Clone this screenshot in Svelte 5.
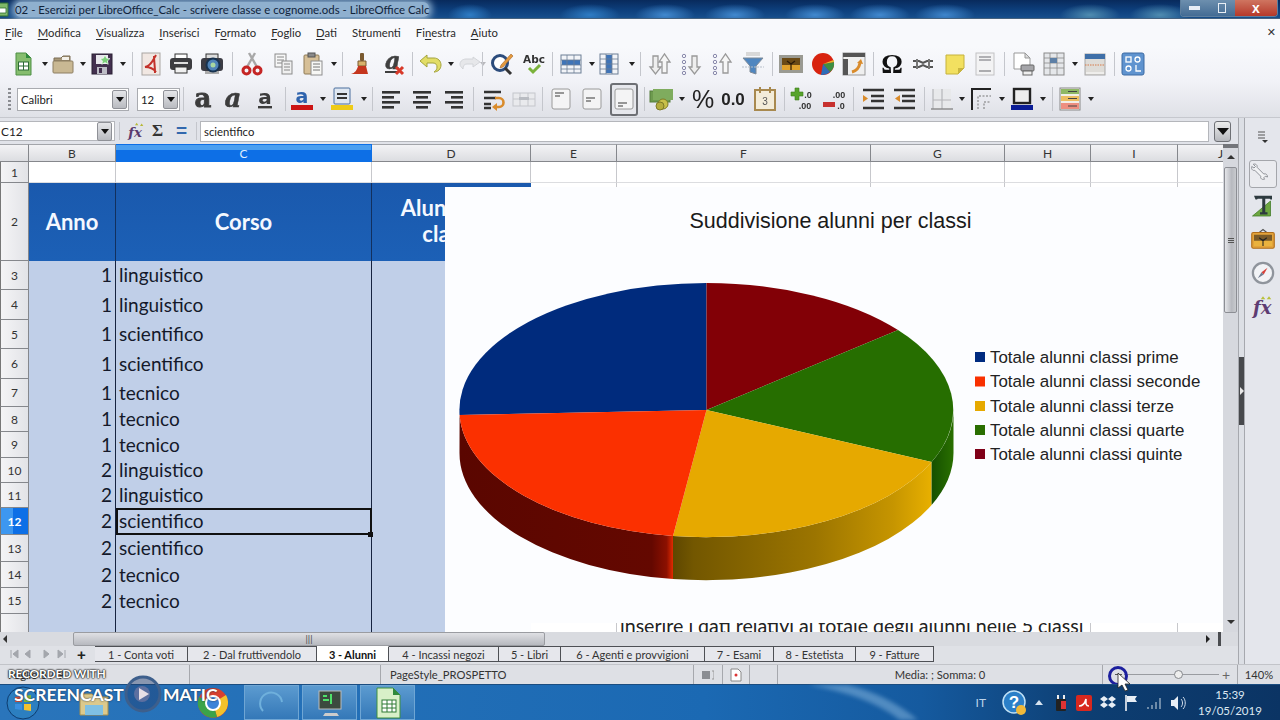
<script>
  const menu = [
    ['', 'F', 'ile'], ['', 'M', 'odifica'], ['', 'V', 'isualizza'], ['', 'I', 'nserisci'], ['F', 'o', 'rmato'],
    ['', 'F', 'oglio'], ['', 'D', 'ati'], ['St', 'r', 'umenti'], ['Fi', 'n', 'estra'], ['', 'A', 'iuto']
  ];

  // c = centre x of each toolbar item on the window
  function place(items) {
    let end = 0;
    return items.map(([k, c, w, label]) => {
      const width = w ?? (k === 'dd' ? 7 : k === 'sep' ? 1 : 24);
      const ml = c - width / 2 - end;
      end = c + width / 2;
      return { k, width, ml, label };
    });
  }

  const tb1 = place([
    ['new', 23], ['dd', 45], ['open', 64], ['dd', 84], ['save', 104], ['dd', 125], ['sep', 135], ['pdf', 154], ['print', 184],
    ['preview', 215], ['sep', 235], ['cut', 255], ['copy', 286], ['paste', 316], ['dd', 337], ['sep', 346], ['brush', 365],
    ['clear', 398], ['sep', 416], ['undo', 434], ['dd', 455], ['redo', 475], ['ddo', 497], ['sep', 505], ['find', 525], ['abc', 557],
    ['sep', 575], ['rows', 594], ['dd', 615], ['cols', 633], ['dd', 656], ['sep', 665], ['sort', 685], ['sortup', 716], ['sortdn', 747],
    ['filter', 778], ['sep', 797], ['image', 816], ['chart', 848], ['pivot', 879], ['sep', 898], ['omega', 917], ['link', 948],
    ['note', 980], ['header', 1010], ['sep', 1029], ['area', 1048], ['freeze', 1079], ['dd', 1100], ['split', 1121], ['sep', 1140], ['design', 1159]
  ]);

  const tb2 = place([
    ['combo', 73, 112, 'Calibri'], ['combo', 158.5, 43, '12'], ['sep', 183], ['bold', 203], ['italic', 233], ['under', 265], ['sep', 285],
    ['fcolor', 302], ['dd', 323], ['bgcolor', 343], ['dd', 365], ['sep', 374], ['left', 393], ['center', 424], ['right', 456], ['sep', 475],
    ['wrap', 495], ['merge', 526], ['sep', 544], ['vtop', 563], ['vmid', 594], ['vbot', 626], ['sep', 646], ['money', 663], ['dd', 684],
    ['percent', 706], ['number', 736], ['date', 768], ['sep', 787], ['adddec', 805], ['deldec', 837], ['sep', 856], ['indent', 876],
    ['outdent', 907], ['sep', 927], ['borders', 945], ['dd', 965], ['bstyle', 985], ['dd', 1006], ['bcolor', 1027], ['dd', 1048],
    ['sep', 1058], ['cond', 1076], ['dd', 1097]
  ]);

  const bars = (rows) => rows.map(([x, y, w]) => `<rect x="${x}" y="${y}" width="${w}" height="2.6" fill="#333"/>`).join('');
  const vbox = (y, lx) => `<rect x="3" y="2" width="18" height="20" rx="2" fill="#f4f4f5" stroke="#9a9a9a"/><path d="M6 ${y}h${lx}M6 ${y + 3}h${lx - 4}" stroke="#777" stroke-width="1.4"/>`;

  const icons = {
    new: `<path d="M5 1h10l5 5v17H5z" fill="#86bd6e" stroke="#4d8f45"/><path d="M15 1l5 5h-5z" fill="#2f8a3c"/><rect x="7.5" y="10" width="10" height="8" fill="#fff" stroke="#2d6a35"/><path d="M7.5 14h10M12.5 10v8" stroke="#2d6a35"/>`,
    open: `<path d="M3 6h7l2-2h7v5H3z" fill="#a89878" stroke="#7a6d55"/><rect x="2" y="9" width="20" height="12" rx="1" fill="#c9b893" stroke="#8d7f63"/><rect x="11" y="5" width="7" height="3" fill="#f3f0e8"/>`,
    save: `<rect x="2" y="2" width="20" height="20" fill="#43304f" stroke="#2b2034"/><rect x="6" y="3" width="12" height="9" fill="#e8e8ec"/><rect x="7" y="15" width="10" height="7" fill="#bdbdc6"/><rect x="9" y="16" width="3" height="5" fill="#43304f"/><path d="M15 3l1.6 3.2 3.4.4-2.5 2.3.7 3.4-3.2-1.7-3.2 1.7.7-3.4L10 6.600l3.400-.4z" fill="#7ccf7a" stroke="#fff" stroke-width=".6"/>`,
    pdf: `<rect x="3" y="1" width="18" height="22" fill="#f1e7e2" stroke="#a9a5a2"/><path d="M17 3C14 8 12 14 6 15c5 0 8 1 11 5M15 4c0 5 1 10 1 17" fill="none" stroke="#c3312a" stroke-width="2"/>`,
    print: `<rect x="6" y="2" width="12" height="5" fill="#fff" stroke="#333"/><rect x="1" y="6" width="22" height="12" rx="3" fill="#3c3c40"/><rect x="5" y="10" width="14" height="2" fill="#ddd"/><rect x="6" y="15" width="12" height="6" fill="#f0f0f0" stroke="#333"/>`,
    preview: `<rect x="6" y="2" width="12" height="5" fill="#ddd" stroke="#333"/><rect x="1" y="6" width="22" height="13" rx="3" fill="#3c3c44"/><rect x="5" y="19" width="14" height="3" fill="#aaa"/><circle cx="13" cy="13" r="6.500" fill="#4f83b8" stroke="#17324f" stroke-width="2"/><circle cx="13" cy="13" r="2.500" fill="#a8d7a0"/>`,
    cut: `<path d="M7 15L15 1M17 15L9 1" stroke="#a8a8a8" stroke-width="2.400"/><circle cx="6.500" cy="18.500" r="3.500" fill="none" stroke="#c52524" stroke-width="3"/><circle cx="17.500" cy="18.500" r="3.500" fill="none" stroke="#c52524" stroke-width="3"/>`,
    copy: `<rect x="4" y="2" width="11" height="13" fill="#f7f7f7" stroke="#8b8b8b"/><path d="M6 5h7M6 8h7M6 11h5" stroke="#888"/><rect x="11" y="9" width="10" height="13" fill="#f0f0f0" stroke="#8b8b8b"/><path d="M13 12h6M13 15h6M13 18h6" stroke="#888"/>`,
    paste: `<rect x="3" y="3" width="15" height="19" rx="1" fill="#d6bf97" stroke="#8e7a57"/><rect x="7" y="1" width="7" height="4" fill="#8a8a8a" stroke="#555"/><rect x="10" y="9" width="11" height="14" fill="#f7f7f5" stroke="#8e8e8e"/><path d="M12 12h7M12 15h7M12 18h7" stroke="#777"/>`,
    brush: `<rect x="11" y="1" width="4" height="8" rx="1" fill="#7a5a30"/><path d="M9 9h8v5H9z" fill="#d8b26a" stroke="#7a5a30"/><path d="M9 14h8l2 8H2c4-1 6-4 7-8z" fill="#c5361e"/>`,
    clear: `<text x="3" y="17" font-family="DejaVu Serif" font-style="italic" font-weight="700" font-size="24" fill="#3f3f3f" stroke="#3f3f3f" stroke-width=".5">a</text><rect x="3" y="19" width="13" height="2" fill="#3f3f3f"/><path d="M14 15l7 7M21 15l-7 7" stroke="#d83a2a" stroke-width="3"/>`,
    undo: `<path d="M9 3L2 9l7 6v-4h6c3 0 4 2 4 4s-1 4-3 5c4 0 7-3 7-7s-3-7-7-7H9z" fill="#e2dd66" stroke="#a3a33c"/>`,
    redo: `<path d="M15 5l7 5-7 5v-3H9c-3 0-4 2-4 5-2-2-3-3-3-5 0-3 3-5 6-5h7z" fill="#e6e7ea" stroke="#d2d4d8"/>`,
    find: `<circle cx="10" cy="11" r="7.500" fill="#fff" stroke="#2c4c7c" stroke-width="3"/><path d="M15 16l6 6" stroke="#333" stroke-width="3"/><path d="M21 2l2 2-10 11-3 1 1-3z" fill="#e49a3e" stroke="#a5642a" stroke-width=".6"/>`,
    abc: `<text x="12" y="11" text-anchor="middle" font-family="DejaVu Sans" font-weight="700" font-size="10.500" fill="#333">Abc</text><path d="M7 16l4 4 7-7" fill="none" stroke="#7bb23b" stroke-width="3"/>`,
    rows: `<rect x="2" y="3" width="20" height="18" fill="#f2f4f8" stroke="#6d7f95"/><rect x="3" y="8" width="18" height="5" fill="#3f74b8"/><path d="M2 8h20M2 13h20M2 17h20M8 3v18M15 3v18" stroke="#6d7f95" stroke-width=".8"/>`,
    cols: `<rect x="3" y="2" width="18" height="20" fill="#f2f4f8" stroke="#6d7f95"/><rect x="9" y="3" width="6" height="18" fill="#3f74b8"/><path d="M9 2v20M15 2v20M3 7h18M3 12h18M3 17h18" stroke="#6d7f95" stroke-width=".8"/>`,
    sort: `<path d="M5 4h5v11h3l-5.500 7L2 15h3z" fill="#eee" stroke="#999" stroke-width="1.300"/><path d="M14 10h-3l5.500-8L22 10h-3v11h-5z" fill="#f6f6f6" stroke="#999" stroke-width="1.300"/>`,
    sortup: `<circle cx="5" cy="4" r="1.700" fill="none" stroke="#88a"/><circle cx="5" cy="10" r="1.700" fill="none" stroke="#88a"/><circle cx="5" cy="16" r="1.700" fill="none" stroke="#88a"/><circle cx="5" cy="21" r="1.700" fill="none" stroke="#88a"/><path d="M13 4h5v11h3l-5.500 7L10 15h3z" fill="#eee" stroke="#999" stroke-width="1.300"/>`,
    sortdn: `<circle cx="5" cy="4" r="1.700" fill="none" stroke="#88a"/><circle cx="5" cy="10" r="1.700" fill="none" stroke="#88a"/><circle cx="5" cy="16" r="1.700" fill="none" stroke="#88a"/><circle cx="5" cy="21" r="1.700" fill="none" stroke="#88a"/><path d="M13 21V10h-3l5.500-8L21 10h-3v11z" fill="#f6f6f6" stroke="#999" stroke-width="1.300"/>`,
    filter: `<rect x="5" y="0" width="14" height="4" fill="#d8d8d8"/><path d="M2 6h20l-7 8v8l-6-2v-6z" fill="#4f86c0" stroke="#7f8a97"/><path d="M1 15h22" stroke="#b7bfca" stroke-dasharray="2 1"/>`,
    image: `<rect x="0" y="3" width="24" height="18" fill="#9a9a92"/><rect x="3" y="6" width="18" height="12" fill="#6b4a16"/><rect x="3" y="13" width="18" height="5" fill="#e0a12c"/><path d="M12 18v-7M12 12l-4-3M12 12l4-3" stroke="#2b1a08" stroke-width="1.200"/>`,
    chart: `<circle cx="12" cy="12" r="11" fill="#d8230f"/><path d="M12 12L23 10a11 11 0 0 1-4 10z" fill="#3d8f42"/><path d="M12 12l7 8a11 11 0 0 1-9 3z" fill="#2d6cb8"/><path d="M12 12l11-2a11 11 0 0 0-.5-2z" fill="#e8b830"/>`,
    pivot: `<rect x="1" y="1" width="22" height="22" fill="#efefef" stroke="#999"/><rect x="1" y="1" width="22" height="4" fill="#555"/><rect x="1" y="7" width="5" height="16" fill="#555"/><path d="M10 20c4-1 7-4 8-9" fill="none" stroke="#d98b2b" stroke-width="3"/><path d="M15 11l4-4 2 5z" fill="#d98b2b"/>`,
    omega: `<text x="12" y="21" text-anchor="middle" font-family="Liberation Serif" font-weight="700" font-size="27" fill="#111">Ω</text>`,
    link: `<path d="M2 9h6l4 2 4-2h6M2 15h6l4-2 4 2h6" fill="none" stroke="#555" stroke-width="2"/><path d="M6 7v10M18 7v10" stroke="#777" stroke-width="2"/>`,
    note: `<path d="M3 3h18v13l-6 6H3z" fill="#f2e060" stroke="#c5b23c"/><path d="M21 16h-6v6z" fill="#c9b640"/>`,
    header: `<rect x="3" y="1" width="18" height="22" fill="#f3f3f4" stroke="#c2c2c4"/><path d="M6 5h12M6 8h12" stroke="#9a9a9e" stroke-width="1.300"/><path d="M6 19h12" stroke="#9a9a9e" stroke-width="1.600"/>`,
    area: `<path d="M3 1h11l5 5v11H3z" fill="#fff" stroke="#999"/><path d="M14 1l5 5h-5z" fill="#ddd" stroke="#999"/><rect x="10" y="13" width="13" height="6" rx="1" fill="#a5a5a9" stroke="#666"/><rect x="12" y="19" width="9" height="4" fill="#eee" stroke="#666"/>`,
    freeze: `<rect x="2" y="1" width="20" height="22" fill="#e5e7ea" stroke="#8a8a8a"/><path d="M2 6h20M2 11h20M2 16h20M8 1v22M15 1v22" stroke="#8a8a8a" stroke-width=".8"/><rect x="8" y="6" width="7" height="5" fill="#5d7fa6"/>`,
    split: `<rect x="2" y="2" width="20" height="21" fill="#dedcd8" stroke="#a8a8a8"/><rect x="2" y="2" width="20" height="5" fill="#3f6fa8"/><path d="M2 13h20" stroke="#d67b4a" stroke-dasharray="1.500 1"/><path d="M3 21h18" stroke="#fff"/>`,
    design: `<rect x="1" y="1" width="22" height="22" rx="2" fill="#5f93cf" stroke="#3c6ba3"/><g fill="none" stroke="#fff" stroke-width="1.300"><rect x="5" y="5" width="5" height="5"/><circle cx="16.500" cy="7.500" r="2.500"/><circle cx="7.500" cy="16.500" r="2.500"/><path d="M15 13v6h5"/></g>`,
    bold: `<text x="12" y="20" text-anchor="middle" font-family="DejaVu Serif" font-weight="700" font-size="26" fill="#3c3c3c" stroke="#3c3c3c" stroke-width=".8">a</text>`,
    italic: `<text x="12" y="20" text-anchor="middle" font-family="DejaVu Serif" font-style="italic" font-weight="700" font-size="26" fill="#3c3c3c" stroke="#3c3c3c" stroke-width=".5">a</text>`,
    under: `<text x="12" y="17" text-anchor="middle" font-family="DejaVu Sans" font-weight="700" font-size="20" fill="#3c3c3c">a</text><rect x="5" y="19" width="14" height="2.400" fill="#3c3c3c"/>`,
    fcolor: `<text x="12" y="16" text-anchor="middle" font-family="DejaVu Sans" font-weight="700" font-size="19" fill="#2e63ad">a</text><rect x="1" y="18" width="22" height="5" fill="#cc1414"/>`,
    bgcolor: `<rect x="4" y="1" width="16" height="16" rx="1" fill="#dfe7f1" stroke="#4a6f9e"/><path d="M7 7h10M7 11h10" stroke="#333" stroke-width="2.200"/><rect x="1" y="18" width="22" height="5" fill="#eecb17"/>`,
    left: bars([[3, 4, 18], [3, 9, 12], [3, 14, 18], [3, 19, 12]]),
    center: bars([[3, 4, 18], [6, 9, 12], [3, 14, 18], [6, 19, 12]]),
    right: bars([[3, 4, 18], [9, 9, 12], [3, 14, 18], [9, 19, 12]]),
    wrap: `<path d="M3 5h17M3 11h12M3 17h7M3 21h7" stroke="#333" stroke-width="2.400"/><path d="M14 11h4a4 4 0 0 1 0 9h-4" fill="none" stroke="#d98b2b" stroke-width="2.600"/><path d="M16 16l-5 4 5 4z" fill="#d98b2b"/>`,
    merge: `<rect x="1" y="6" width="22" height="13" fill="#e9eaed" stroke="#c4c6cb"/><path d="M1 12h22M8 6v13M16 6v13" stroke="#c4c6cb"/><rect x="7" y="10" width="10" height="3" fill="#b9bcc2"/>`,
    vtop: vbox(6, 9),
    vmid: vbox(11, 9),
    vbot: vbox(16, 9),
    money: `<rect x="1" y="4" width="20" height="11" fill="#6d9a4e" stroke="#557c3b"/><rect x="4" y="2" width="20" height="11" fill="#7fac5e"/><circle cx="14" cy="17" r="5" fill="#c8c04a" stroke="#7d7a26"/><circle cx="11" cy="19" r="4" fill="#b5ad3d" stroke="#7d7a26"/>`,
    percent: `<text x="12" y="21" text-anchor="middle" font-family="Liberation Sans" font-size="25" fill="#222">%</text>`,
    number: `<text x="12" y="18" text-anchor="middle" font-family="Liberation Sans" font-weight="700" font-size="17" fill="#222">0.0</text>`,
    date: `<rect x="2" y="3" width="20" height="20" fill="#f3ecd9" stroke="#a8894f" stroke-width="2"/><path d="M7 0v6M17 0v6" stroke="#a8894f" stroke-width="2"/><text x="12" y="18" text-anchor="middle" font-family="Liberation Sans" font-size="10" fill="#555">3</text>`,
    adddec: `<path d="M5 1h4v4h4v4H9v4H5V9H1V5h4z" fill="#57a32c" stroke="#3e7d1d" stroke-width=".6"/><text x="18" y="11" text-anchor="middle" font-family="Liberation Sans" font-weight="700" font-size="9" fill="#333">.0</text><text x="15" y="22" text-anchor="middle" font-family="Liberation Sans" font-weight="700" font-size="9" fill="#333">.00</text>`,
    deldec: `<rect x="1" y="15" width="12" height="5" fill="#c7312f"/><text x="17" y="11" text-anchor="middle" font-family="Liberation Sans" font-weight="700" font-size="9" fill="#333">.00</text><text x="19" y="22" text-anchor="middle" font-family="Liberation Sans" font-weight="700" font-size="9" fill="#333">.0</text>`,
    indent: `<path d="M2 3h21M10 9h13M10 14h13M2 21h21" stroke="#333" stroke-width="2.600"/><path d="M2 8l5 3.500-5 3.500z" fill="#d98b2b"/>`,
    outdent: `<path d="M2 3h21M10 9h13M10 14h13M2 21h21" stroke="#333" stroke-width="2.600"/><path d="M8 8l-5 3.500 5 3.500z" fill="#d98b2b"/>`,
    borders: `<rect x="3" y="2" width="18" height="20" fill="#e8e9eb"/><path d="M3 2v20M12 2v20M3 13h18" stroke="#b5b6ba" stroke-width="1.200"/><path d="M1 22h22" stroke="#888" stroke-width="1.400"/>`,
    bstyle: `<path d="M3 23V2h19" fill="none" stroke="#222" stroke-width="2"/><path d="M9 22V9h13M15 22v-7h7" fill="none" stroke="#777" stroke-dasharray="2 1.500"/>`,
    bcolor: `<rect x="4" y="2" width="16" height="14" fill="#eee" stroke="#222" stroke-width="2.400"/><rect x="1" y="18" width="22" height="5" fill="#0b1d96"/>`,
    cond: `<rect x="2" y="1" width="20" height="22" fill="#f1efe8" stroke="#888"/><rect x="3" y="2" width="18" height="5" fill="#8fb865"/><rect x="3" y="9" width="18" height="5" fill="#edbe62"/><rect x="3" y="16" width="18" height="6" fill="#ee8f80"/><path d="M10 4.500h9M10 11.500h9M10 19h9" stroke="#444"/>`,
    fx: `<text x="12" y="19" text-anchor="middle" font-family="DejaVu Serif" font-style="italic" font-weight="700" font-size="16" fill="#5b3a6e">fx</text><path d="M12 5l2-3 2 3zM18 6l2-3 2 3z" fill="#b7b937"/>`
  };

  const wrench = `<path d="M3 3c3-1 6 1 5 4l9 9c3-1 5 1 5 4l-3-1-2 2 1 2c-3 1-6-1-5-4L5 11C2 12 0 9 1 6l3 2 2-2z" fill="#f2f3f5" stroke="#8c8f95" stroke-width="1.300"/>`;
  const sideIcons = [
    { cls: 'sel', svg: wrench },
    { cls: '', svg: `<path d="M2 28L26 8v20z" fill="#6da741" stroke="#3f7a24"/><path d="M4 1h24v5h-2l-1-1h-6v18h3v3H12v-3h3V5H9L8 6H6z" fill="#2d3a3f"/>` },
    { cls: '', svg: `<path d="M11 6l5-4 5 4" fill="none" stroke="#555" stroke-width="1.500"/><rect x="1" y="6" width="30" height="21" rx="2" fill="#e3a33a" stroke="#b06e1c" stroke-width="1.500"/><rect x="4" y="9" width="24" height="15" fill="#7a5a28"/><rect x="4" y="17" width="24" height="7" fill="#eab23e"/><path d="M16 24v-9M16 17l-5-4M16 17l5-4" stroke="#222" stroke-width="1.400"/>` },
    { cls: '', svg: `<circle cx="16" cy="16" r="13.500" fill="#f2f3f6" stroke="#8f949c" stroke-width="3"/><path d="M22 9l-5 9-3-3z" fill="#d8413a"/><path d="M9 23l5-8 3 3z" fill="#6f7b90"/>` },
    { cls: '', svg: `<text x="15" y="26" text-anchor="middle" font-family="DejaVu Serif" font-style="italic" font-weight="700" font-size="24" fill="#5e3c72">fx</text><path d="M13 7l3-4 3 4zM21 7l3-4 3 4z" fill="#b9c03a"/>` }
  ];

  const cols = ['B', 'C', 'D', 'E', 'F', 'G', 'H', 'I', 'J'];
  const data = [
    [3, 29, 1, 'linguistico'], [4, 30, 1, 'linguistico'], [5, 29, 1, 'scientifico'], [6, 30, 1, 'scientifico'], [7, 28, 1, 'tecnico'],
    [8, 25, 1, 'tecnico'], [9, 26, 1, 'tecnico'], [10, 25, 2, 'linguistico'], [11, 25, 2, 'linguistico'], [12, 27, 2, 'scientifico'],
    [13, 27, 2, 'scientifico'], [14, 26, 2, 'tecnico'], [15, 26, 2, 'tecnico']
  ];

  const tabs = [
    ['1 - Conta voti', 93], ['2 - Dal fruttivendolo', 129], ['3 - Alunni', 72], ['4 - Incassi negozi', 110], ['5 - Libri', 62],
    ['6 - Agenti e provvigioni', 144], ['7 - Esami', 69], ['8 - Estetista', 82], ['9 - Fatture', 78]
  ];

  const legend = [
    ['Totale alunni classi prime', '#002b80', 357],
    ['Totale alunni classi seconde', '#f93000', 381.5],
    ['Totale alunni classi terze', '#e6a900', 406],
    ['Totale alunni classi quarte', '#2a6e00', 430],
    ['Totale alunni classi quinte', '#7f0018', 454]
  ];
</script>

<div class="win">
  <header class="title">
    <svg class="appicon" width="12" height="15" viewBox="0 0 12 15"><path d="M0 1h11v13H0z" fill="#7fb868" stroke="#2f6d2f" /><path d="M2 6h7v5H2z" fill="#fff" stroke="#2f6d2f" stroke-width=".8" /></svg>
    <span class="title-text">02 - Esercizi per LibreOffice_Calc - scrivere classe e cognome.ods - LibreOffice Calc</span>
    <div class="winbtns">
      <span class="wb"><i class="min"></i></span>
      <span class="wb"><i class="max"></i></span>
      <span class="wb close">x</span>
    </div>
  </header>

  <nav class="menu">
    {#each menu as [a, u, b]}
      <span>{a}<u>{u}</u>{b}</span>
    {/each}
    <span class="menu-x">✕</span>
  </nav>

  {#snippet toolbar(items, cls)}
    <div class="tb {cls}">
      {#each items as it}
        {#if it.k === 'sep'}
          <i class="sep" style="margin-left:{it.ml}px"></i>
        {:else if it.k === 'dd' || it.k === 'ddo'}
          <i class="dd" class:off={it.k === 'ddo'} style="margin-left:{it.ml}px"></i>
        {:else if it.k === 'combo'}
          <div class="combo" style="margin-left:{it.ml}px;width:{it.width}px">
            <span>{it.label}</span>
            <b class="cbtn"><i></i></b>
          </div>
        {:else}
          <span class="ic" class:on={it.k === 'vbot'} style="margin-left:{it.ml}px">
            <svg width="24" height="24" viewBox="0 0 24 24">{@html icons[it.k]}</svg>
          </span>
        {/if}
      {/each}
    </div>
  {/snippet}

  {@render toolbar(tb1, 'tb1')}
  {@render toolbar(tb2, 'tb2')}

  <div class="body">
    <div class="work">
      <div class="formula">
        <div class="namebox"><span>C12</span><b class="cbtn"><i></i></b></div>
        <i class="sep"></i>
        <svg class="fbtn" width="20" height="20" viewBox="0 0 24 24">{@html icons.fx}</svg>
        <span class="sigma">Σ</span>
        <span class="equals">=</span>
        <i class="sep"></i>
        <div class="finput">scientifico</div>
        <b class="bigbtn"><i></i></b>
      </div>

      <div class="sheetrow">
        <div class="sheet">
          <div class="row colhead">
            <div class="corner"></div>
            {#each cols as c}
              <div class="ch" class:cur={c === 'C'}>{c}</div>
            {/each}
          </div>
          <div class="row" style="height:21px">
            <div class="rh">1</div>
            {#each cols as c}
              <div class="cell blank"></div>
            {/each}
          </div>
          <div class="row" style="height:78px">
            <div class="rh">2</div>
            <div class="cell hd">Anno</div>
            <div class="cell hd">Corso</div>
            <div class="cell hd small">Alunni per<br />classe</div>
            {#each cols.slice(3) as c}
              <div class="cell blank"></div>
            {/each}
          </div>
          {#each data as [n, h, y, corso]}
            <div class="row" style="height:{h}px">
              <div class="rh" class:cur={n === 12}>{n}</div>
              <div class="cell tint num">{y}</div>
              <div class="cell tint txt" class:active={n === 12}>{corso}</div>
              <div class="cell tint d"></div>
              {#each cols.slice(3) as c}
                <div class="cell blank"></div>
              {/each}
            </div>
          {/each}
          <div class="row" style="height:18px">
            <div class="rh"></div>
            <div class="cell tint"></div>
            <div class="cell tint"></div>
            <div class="cell tint d end"></div>
            <div class="cell blank"></div>
            <div class="cell blank over">inserire i dati relativi al totale degli alunni nelle 5 classi</div>
            <div class="cell blank"></div>
            <div class="cell blank"></div>
          </div>

          <svg class="chart" width="778" height="436" viewBox="445 187 778 436">
            <defs>
              <linearGradient id="sideO" gradientUnits="userSpaceOnUse" x1="460" x2="673" y1="0" y2="0">
                <stop offset="0" stop-color="#5a0600" /><stop offset=".9" stop-color="#640800" /><stop offset=".97" stop-color="#8c1000" /><stop offset="1" stop-color="#e02a00" />
              </linearGradient>
              <linearGradient id="sideY" gradientUnits="userSpaceOnUse" x1="673" x2="932" y1="0" y2="0">
                <stop offset="0" stop-color="#5e4700" /><stop offset=".08" stop-color="#735700" /><stop offset=".55" stop-color="#9c7500" /><stop offset=".85" stop-color="#c69500" /><stop offset="1" stop-color="#e8b000" />
              </linearGradient>
              <linearGradient id="sideG" gradientUnits="userSpaceOnUse" x1="932" x2="954" y1="0" y2="0">
                <stop offset="0" stop-color="#155000" /><stop offset="1" stop-color="#2a7000" />
              </linearGradient>
            </defs>
            <rect x="445" y="187" width="778" height="436" fill="#fcfdff" />
            <text class="ctitle" x="830.500" y="228" text-anchor="middle">Suddivisione alunni per classi</text>

            <path d="M459.600 415A247 127 0 0 0 673 536V579A247 127 0 0 1 459.500 453Z" fill="url(#sideO)" />
            <path d="M673 536A247 127 0 0 0 931.600 462V505A247 127 0 0 1 673 579Z" fill="url(#sideY)" />
            <path d="M931.600 462A247 127 0 0 0 953.500 410V453A247 127 0 0 1 931.600 505Z" fill="url(#sideG)" />

            <path d="M706.500 410L459.600 415A247 127 0 0 1 706.500 283Z" fill="#002b7d" />
            <path d="M706.500 410V283A247 127 0 0 1 898 330Z" fill="#820006" />
            <path d="M706.500 410L898 330A247 127 0 0 1 931.600 462Z" fill="#266e00" />
            <path d="M706.500 410L931.600 462A247 127 0 0 1 673 536Z" fill="#e6a900" />
            <path d="M706.500 410L673 536A247 127 0 0 1 459.600 415Z" fill="#fb3000" />

            {#each legend as [label, color, y]}
              <rect x="975" y={y - 5} width="10" height="10" fill={color} />
              <text class="ltext" x="990" y={y + 5.500}>{label}</text>
            {/each}
          </svg>
        </div>

        <div class="vscroll">
          <i class="vsplit"></i>
          <i class="arr up"></i>
          <div class="vthumb"><i></i><i></i><i></i></div>
          <i class="arr down"></i>
        </div>
      </div>

      <div class="hscroll">
        <i class="arr lf"></i>
        <div class="hthumb">|||</div>
        <i class="arr rt"></i>
        <i class="hsplit"></i>
      </div>

      <div class="tabsrow">
        <div class="navs">
          <svg width="60" height="12" viewBox="0 0 60 12">
            <path d="M3 2v8M10 2L5 6l5 4z M22 2l-5 4 5 4z M36 2l5 4-5 4z M50 2l5 4-5 4z M57 2v8" fill="#a3a6ac" stroke="#a3a6ac" />
          </svg>
          <span class="plus">+</span>
        </div>
        {#each tabs as [name, w], i}
          <div class="tab" class:on={i === 2} style="width:{w}px">{name}</div>
        {/each}
      </div>
    </div>

    <div class="splitter"><i></i></div>

    <aside class="side">
      <svg class="sidemenu" width="14" height="14" viewBox="0 0 14 14"><path d="M3 2h7M3 5h7M3 8h7" stroke="#555" /><path d="M7 10h6l-3 3z" fill="#333" /></svg>
      {#each sideIcons as s}
        <span class="sbtn {s.cls}"><svg width="24" height="24" viewBox="0 0 32 32">{@html s.svg}</svg></span>
      {/each}
    </aside>
  </div>

  <footer class="status">
    <div class="st" style="width:190px">Foglio 3 / 9</div>
    <div class="st" style="width:191px"></div>
    <div class="st" style="width:313px">PageStyle_PROSPETTO</div>
    <div class="st mid" style="width:29px"><svg width="12" height="10" viewBox="0 0 12 10"><rect x="0" y="1" width="8" height="8" fill="#8a8d92" /><path d="M10 1h2v8h-2" fill="none" stroke="#999" /></svg></div>
    <div class="st mid" style="width:27px"><svg width="12" height="14" viewBox="0 0 12 14"><path d="M1 1h7l3 3v9H1z" fill="#fff" stroke="#888" /><circle cx="6" cy="7" r="1.500" fill="#d33" /></svg></div>
    <div class="st" style="width:28px"></div>
    <div class="st mid" style="width:325px">Media: ; Somma: 0</div>
    <div class="st zoomcell" style="width:135px">
      <i class="zminus"></i>
      <div class="ztrack"><i></i></div>
      <span>+</span>
      <svg class="clickring" width="22" height="22" viewBox="0 0 22 22"><circle cx="11" cy="11" r="8.500" fill="none" stroke="#1c1f9e" stroke-width="3" /></svg>
      <svg class="cursor" width="14" height="20" viewBox="0 0 14 20"><path d="M1 1v15l4-3 3 6 3-1-3-6h5z" fill="#fff" stroke="#222" stroke-width=".8" /></svg>
    </div>
    <div class="st mid last">140%</div>
  </footer>

  <div class="taskbar">
    <svg class="sheen" width="140" height="35" viewBox="0 0 140 35"><path d="M0 0H40Q80 10 110 35H92Q60 10 0 0Z" fill="#a9d2f0" opacity=".4" /></svg>
    <div class="orb">
      <svg width="34" height="34" viewBox="0 0 34 34">
        <circle cx="17" cy="17" r="16" fill="#2c7fc0" stroke="#0e3d70" />
        <path d="M9 11l7-1v6H9z" fill="#e2533a" /><path d="M18 10l7-1v7h-7z" fill="#7fb93a" /><path d="M9 18h7v6l-7-1z" fill="#3a8fe0" /><path d="M18 18h7v7l-7-1z" fill="#f2c230" />
      </svg>
    </div>
    <div class="pin" style="margin-left:37px">
      <svg width="34" height="30" viewBox="0 0 34 30"><path d="M3 6h12l3 3h13v18H3z" fill="#dcc98c" stroke="#a58f4f" /><rect x="8" y="17" width="18" height="10" fill="#7fc0e4" /></svg>
    </div>
    <div class="pin" style="margin-left:86px">
      <svg width="32" height="32" viewBox="0 0 32 32"><circle cx="16" cy="16" r="15" fill="#d8402f" /><path d="M16 16L29 8a15 15 0 0 1-9 22z" fill="#f3c22c" /><path d="M16 16l4 14A15 15 0 0 1 2 10z" fill="#3ba34a" /><circle cx="16" cy="16" r="7" fill="#3b82d8" stroke="#fff" stroke-width="2" /></svg>
    </div>
    <div class="tile" style="margin-left:15px">
      <svg width="28" height="28" viewBox="0 0 28 28"><path d="M5 22a11 11 0 1 1 19-9" fill="none" stroke="#6fb0dc" stroke-width="2" /></svg>
    </div>
    <div class="tile">
      <svg width="30" height="30" viewBox="0 0 30 30"><rect x="4" y="3" width="22" height="18" fill="#3c4a3f" stroke="#bbb" /><path d="M8 8h4M8 12h6M16 6v10" stroke="#4fe06a" stroke-width="2" /><path d="M10 25h12l2 3H8z" fill="#ccc" /></svg>
    </div>
    <div class="tile">
      <svg width="28" height="32" viewBox="0 0 28 32"><path d="M3 1h16l7 7v23H3z" fill="#d8f0c8" stroke="#3f8f3f" /><path d="M19 1l7 7h-7z" fill="#2f8a3c" /><rect x="8" y="13" width="14" height="12" fill="#fff" stroke="#2f7a35" /><path d="M8 17h14M8 21h14M13 13v12M18 13v12" stroke="#2f7a35" /></svg>
    </div>

    <div class="tray">
      <span class="lang">IT</span>
      <svg class="help" width="26" height="26" viewBox="0 0 26 26"><circle cx="12" cy="12" r="11" fill="#2a7fc8" stroke="#bfe0f5" stroke-width="1.500" /><text x="12" y="18" text-anchor="middle" font-family="Liberation Sans" font-weight="700" font-size="17" fill="#fff">?</text><circle cx="19" cy="20" r="5" fill="#f0b93a" /></svg>
      <i class="trayup"></i>
      <svg class="t1" width="14" height="18" viewBox="0 0 14 18"><rect x="2" y="5" width="10" height="12" rx="1" fill="#222" /><rect x="7" y="7" width="5" height="8" fill="#d33" /><path d="M4 1v4M10 1v4" stroke="#eee" stroke-width="2" /></svg>
      <svg class="t2" width="16" height="16" viewBox="0 0 16 16"><rect width="16" height="16" rx="2" fill="#d8281f" /><path d="M3 11c4 0 6-3 7-7 0 3-1 7 3 7" fill="none" stroke="#fff" stroke-width="1.600" /></svg>
      <svg class="t3" width="16" height="14" viewBox="0 0 16 14"><path d="M4 0l4 3-4 3-4-3zM12 0l4 3-4 3-4-3zM4 6l4 3-4 3-4-3zM12 6l4 3-4 3-4-3z" fill="#e8eef5" /></svg>
      <svg class="t4" width="14" height="18" viewBox="0 0 14 18"><path d="M2 1v16" stroke="#fff" stroke-width="1.500" /><path d="M3 2h10l-2 3 2 3H3z" fill="#e8eef5" /></svg>
      <svg class="t5" width="16" height="14" viewBox="0 0 16 14"><path d="M1 11h2v2H1zM5 9h2v4H5zM9 6h2v7H9zM13 2h2v11h-2z" fill="#6d8aa8" /></svg>
      <svg class="t6" width="16" height="16" viewBox="0 0 16 16"><path d="M1 5h3l4-4v14l-4-4H1z" fill="#e8eef5" /><path d="M11 4c2 2 2 6 0 8M13 2c3 3 3 9 0 12" fill="none" stroke="#d0dcea" /></svg>
      <div class="clock"><span>15:39</span><span>19/05/2019</span></div>
    </div>
  </div>

  <div class="cast">
    <div class="rec">RECORDED WITH</div>
    <div class="castline">
      <span>SCREENCAST</span>
      <svg width="40" height="40" viewBox="0 0 40 40"><circle cx="20" cy="20" r="17" fill="rgba(30,60,110,.45)" stroke="#3d5f8c" stroke-width="3" /><circle cx="19" cy="20" r="8" fill="#5c6fa0" /><path d="M16 14l10 6-10 6z" fill="#e9dfe6" /></svg>
      <span>MATIC</span>
    </div>
  </div>
</div>

<style>
  :global(body) {
    margin: 0;
    overflow: hidden;
  }
  .win {
    position: relative;
    width: 1280px;
    height: 720px;
    overflow: hidden;
    display: flex;
    flex-direction: column;
    font-family: Lato, sans-serif;
    font-size: 11.300px;
    color: #222;
    background: #e4e6eb;
  }
  svg {
    display: block;
    flex: none;
  }

  .title {
    height: 19px;
    flex: none;
    display: flex;
    align-items: center;
    position: relative;
    box-sizing: border-box;
    border-bottom: 1px solid #45627f;
    background:
      radial-gradient(ellipse 22px 11px at 470px 15px, #2e7cc4, transparent),
      radial-gradient(ellipse 30px 11px at 590px 15px, #2e7cc4, transparent),
      radial-gradient(ellipse 30px 11px at 665px 15px, #4189cf, transparent),
      radial-gradient(ellipse 30px 11px at 735px 15px, #4189cf, transparent),
      radial-gradient(ellipse 30px 11px at 815px 15px, #4189cf, transparent),
      radial-gradient(ellipse 30px 11px at 880px 15px, #4189cf, transparent),
      radial-gradient(ellipse 30px 11px at 945px 15px, #3f86cc, transparent),
      radial-gradient(ellipse 30px 11px at 1090px 15px, #4f8cb0, transparent),
      radial-gradient(ellipse 30px 11px at 1160px 15px, #4f8cb0, transparent),
      linear-gradient(180deg, #082a5c 0, #0d3f7c 55%, #174f8c 100%);
  }
  .appicon {
    margin-left: -3px;
  }
  .title-text {
    margin-left: 6px;
    font-size: 11.400px;
    line-height: 15px;
    color: #10233b;
    white-space: nowrap;
    background: #8fb0cf;
    box-shadow: 0 0 7px 3px #8fb0cf;
    border-radius: 6px;
  }
  .winbtns {
    position: absolute;
    right: 2px;
    top: 0;
    height: 16px;
    display: flex;
    border: 1px solid #5e7f9e;
    border-top: 0;
    border-radius: 0 0 4px 4px;
    overflow: hidden;
  }
  .wb {
    width: 27px;
    display: flex;
    align-items: center;
    justify-content: center;
    background: linear-gradient(180deg, #6d8fae, #446c94);
  }
  .wb.close {
    width: 42px;
    background: linear-gradient(180deg, #cf7560, #b5392a);
    color: #fff;
    font: 700 14px/14px "Liberation Sans", sans-serif;
  }
  .min {
    width: 11px;
    height: 4px;
    background: #e8eef5;
  }
  .max {
    width: 6px;
    height: 8px;
    border: 1.500px solid #e8eef5;
  }

  .menu {
    height: 27px;
    flex: none;
    display: flex;
    align-items: center;
    gap: 15px;
    padding: 0 0 0 5px;
    position: relative;
    background: #f8f9fc;
    font-size: 11.300px;
    color: #2a2a2a;
  }
  .menu u {
    text-underline-offset: 2px;
  }
  .menu-x {
    margin-left: auto;
    margin-right: 4px;
    font: 700 11px "DejaVu Sans", sans-serif;
    color: #333;
  }

  .tb {
    display: flex;
    align-items: center;
    flex: none;
    position: relative;
  }
  .tb1 {
    height: 35px;
    background: linear-gradient(180deg, #f8f9fc, #f1f2f7);
  }
  .tb2 {
    height: 37px;
    background: linear-gradient(180deg, #f1f2f7, #dfe1e7);
    border-bottom: 1px solid #c6c8ce;
    box-sizing: border-box;
  }
  .tb2::before {
    content: "";
    position: absolute;
    left: 8px;
    top: 7px;
    width: 3px;
    height: 23px;
    background: repeating-linear-gradient(180deg, #8b8d92 0 2px, transparent 2px 4px);
  }
  .ic {
    width: 24px;
    height: 24px;
    flex: none;
    position: relative;
    filter: blur(0.35px);
  }
  .ic.on::before {
    content: "";
    position: absolute;
    inset: -4px -2px -5px -2px;
    border: 2px solid #6d6f74;
    border-radius: 3px;
    background: #e6e7ec;
  }
  .ic svg {
    position: relative;
    overflow: visible;
  }
  .sep {
    width: 1px;
    height: 24px;
    flex: none;
    background: #c4c6cc;
  }
  .dd {
    width: 0;
    height: 0;
    flex: none;
    box-sizing: content-box;
    border: 3.500px solid transparent;
    border-top: 4px solid #222;
    border-bottom: 0;
  }
  .dd.off {
    border-top-color: #b8b8bc;
  }
  .combo {
    height: 23px;
    flex: none;
    box-sizing: border-box;
    display: flex;
    align-items: center;
    justify-content: space-between;
    padding: 0 1px 0 3px;
    background: #fff;
    border: 1px solid #a9abb0;
    font-size: 11.300px;
  }
  .cbtn {
    width: 15px;
    height: 19px;
    flex: none;
    display: flex;
    align-items: center;
    justify-content: center;
    border: 1px solid #8f9197;
    box-sizing: border-box;
    border-radius: 2px;
    background: linear-gradient(180deg, #e4e5e8, #b9bbc0);
  }
  .cbtn i,
  .bigbtn i {
    width: 0;
    height: 0;
    border: 4px solid transparent;
    border-top: 5px solid #111;
    border-bottom: 0;
  }

  .body {
    flex: 1;
    min-height: 0;
    display: flex;
  }
  .work {
    width: 1238px;
    flex: none;
    display: flex;
    flex-direction: column;
  }
  .formula {
    height: 26px;
    flex: none;
    display: flex;
    align-items: center;
    background: #e1e3e9;
    box-sizing: border-box;
  }
  .namebox {
    width: 115px;
    height: 20px;
    flex: none;
    box-sizing: border-box;
    display: flex;
    align-items: center;
    justify-content: space-between;
    padding-left: 1px;
    padding-right: 2px;
    background: #fff;
    border: 1px solid #b4b6bb;
    border-left: 0;
    font-size: 11.800px;
  }
  .formula .sep {
    height: 18px;
    margin-left: 4px;
  }
  .fbtn {
    margin-left: 5px;
    overflow: visible;
  }
  .sigma {
    margin-left: 7px;
    width: 15px;
    font: 700 17px "Liberation Serif", serif;
    color: #333;
  }
  .equals {
    margin-left: 9px;
    width: 16px;
    font: 700 19px/20px "Liberation Sans", sans-serif;
    color: #3268ad;
  }
  .formula .sep + .finput {
    margin-left: 3px;
  }
  .finput {
    width: 1009px;
    height: 21px;
    flex: none;
    box-sizing: border-box;
    padding: 2px 3px;
    background: #fff;
    border: 1px solid #b4b6bb;
    font-size: 11.300px;
    line-height: 15px;
  }
  .bigbtn {
    width: 17px;
    height: 21px;
    margin-left: 5px;
    box-sizing: border-box;
    display: flex;
    align-items: center;
    justify-content: center;
    border: 1px solid #6e7075;
    border-radius: 3px;
    background: linear-gradient(180deg, #eceded, #b7b9be);
  }
  .bigbtn i {
    border-width: 6px;
    border-top-width: 7px;
    border-bottom: 0;
  }

  .sheetrow {
    flex: 1;
    min-height: 0;
    display: flex;
    border-top: 0;
  }
  .sheet {
    --cols: 29px 87px 256px 159px 86px 254px 134px 86px 87px 86px;
    width: 1223px;
    flex: none;
    position: relative;
    overflow: hidden;
    background: #fff;
  }
  .row {
    display: grid;
    grid-template-columns: var(--cols);
    overflow: visible;
  }
  .colhead {
    height: 18px;
  }
  .corner,
  .ch {
    background: linear-gradient(180deg, #f3f3f5, #dcdde1);
    border-right: 1px solid #85878c;
    border-bottom: 1px solid #85878c;
    border-top: 1px solid #a3a5aa;
    box-sizing: border-box;
  }
  .ch {
    display: flex;
    align-items: center;
    justify-content: center;
    font-size: 12px;
    color: #333;
  }
  .ch.cur {
    background: linear-gradient(180deg, #4b9ff0 0, #4b9ff0 30%, #0d6fe6 30%);
    color: #dfeeff;
    border-color: #0d6fe6;
  }
  .rh {
    display: flex;
    align-items: center;
    justify-content: center;
    background: linear-gradient(90deg, #f4f4f6, #e2e3e7);
    border-left: 1px solid #777;
    border-right: 1px solid #85878c;
    border-bottom: 1px solid #85878c;
    box-sizing: border-box;
    font-size: 12px;
    color: #333;
  }
  .rh.cur {
    background: linear-gradient(90deg, #3d97f0 45%, #0d6fe6 45%);
    color: #fff;
    font-weight: 700;
  }
  .cell {
    box-sizing: border-box;
    min-width: 0;
  }
  .blank {
    border-right: 1px solid #c7c8cc;
    border-bottom: 1px solid #dcdde0;
  }
  .hd {
    display: flex;
    align-items: center;
    justify-content: center;
    text-align: center;
    background: linear-gradient(180deg, #1a59ad, #1c60b6);
    border-right: 1px solid #12305e;
    color: #f4f8ff;
    font-size: 22px;
    font-weight: 700;
    line-height: 26px;
  }
  .hd.small {
    white-space: nowrap;
    border-right: 0;
    padding-bottom: 2px;
  }
  .tint {
    background: #c0cfe8;
    border-right: 1px solid #16233f;
    font-size: 19px;
    color: #14192a;
    display: flex;
    align-items: center;
    padding-bottom: 2px;
  }
  .tint.d {
    border-right: 0;
  }
  .tint.end {
    background: linear-gradient(90deg, #c0cfe8 73px, #fcfdff 73px);
  }
  .num {
    justify-content: flex-end;
    padding-right: 3px;
  }
  .txt {
    padding-left: 3px;
    position: relative;
  }
  .active {
    outline: 2px solid #101010;
    outline-offset: -2px;
    z-index: 1;
  }
  .active::after {
    content: "";
    position: absolute;
    right: -2px;
    bottom: -2px;
    width: 5px;
    height: 5px;
    background: #111;
  }
  .over {
    grid-column: span 3;
    white-space: nowrap;
    font-size: 19.600px;
    line-height: 18px;
    padding: 3px 0 0 3px;
    color: #222;
    overflow: visible;
  }
  .chart {
    position: absolute;
    left: 445px;
    top: 43px;
    z-index: 2;
  }
  .ctitle {
    font: 21.500px "Liberation Sans", sans-serif;
    fill: #1a1a1a;
  }
  .ltext {
    font: 16.900px "Liberation Sans", sans-serif;
    fill: #222;
  }

  .vscroll {
    width: 15px;
    flex: none;
    display: flex;
    flex-direction: column;
    align-items: center;
    position: relative;
    background: #d6d8de;
  }
  .vsplit {
    width: 100%;
    height: 4px;
    background: #73757a;
  }
  .arr {
    width: 0;
    height: 0;
    border: 4px solid transparent;
  }
  .arr.up {
    margin-top: 7px;
    border-top: 0;
    border-bottom: 4px solid #333;
  }
  .arr.down {
    margin-top: auto;
    margin-bottom: 8px;
    border-bottom: 0;
    border-top: 4px solid #333;
  }
  .vthumb {
    width: 13px;
    height: 146px;
    margin-top: 8px;
    box-sizing: border-box;
    border: 1px solid #8c8e94;
    border-radius: 2px;
    background: linear-gradient(90deg, #e4e5e9, #b7b9bf 60%, #c8cace);
    display: flex;
    flex-direction: column;
    align-items: center;
    justify-content: center;
    gap: 1px;
  }
  .vthumb i {
    width: 6px;
    height: 1px;
    background: #555;
  }

  .hscroll {
    height: 14px;
    flex: none;
    display: flex;
    align-items: center;
    position: relative;
    background: #d9dbe0;
  }
  .arr.lf {
    margin-left: 3px;
    border-left: 0;
    border-right: 4px solid #333;
  }
  .hthumb {
    margin-left: 66px;
    width: 472px;
    height: 14px;
    box-sizing: border-box;
    text-align: center;
    font: 9px/13px "Liberation Sans", sans-serif;
    color: #555;
    border: 1px solid #9a9ca1;
    border-radius: 2px;
    background: linear-gradient(180deg, #dfe0e4, #b7b9bf);
  }
  .arr.rt {
    margin-left: auto;
    border-right: 0;
    border-left: 4px solid #222;
  }
  .hsplit {
    width: 3px;
    height: 14px;
    margin: 0 17px 0 8px;
    background: #4a4c50;
  }

  .tabsrow {
    height: 18px;
    flex: none;
    display: flex;
    align-items: flex-start;
    background: #dfe1e6;
  }
  .navs {
    width: 95px;
    flex: none;
    height: 16px;
    display: flex;
    align-items: center;
    padding-left: 8px;
    box-sizing: border-box;
  }
  .plus {
    margin-left: 9px;
    font: 700 15px "Liberation Sans", sans-serif;
    color: #222;
  }
  .tab {
    height: 16px;
    flex: none;
    box-sizing: border-box;
    display: flex;
    align-items: center;
    justify-content: center;
    border: 1px solid #4e5055;
    border-left: 0;
    background: #e6e7ec;
    font-size: 11px;
    color: #333;
  }
  .tab:first-of-type {
    border-left: 1px solid #4e5055;
  }
  .tab.on {
    background: #fff;
    border-top-color: #fff;
    font-weight: 700;
    color: #111;
  }

  .splitter {
    width: 7px;
    flex: none;
    position: relative;
    background: #dcdfe5;
    border-left: 1px solid #a6a8ae;
    border-right: 1px solid #a6a8ae;
    box-sizing: border-box;
  }
  .splitter i {
    position: absolute;
    left: 0;
    top: 239px;
    width: 5px;
    height: 68px;
    background: #47494d;
  }
  .splitter i::after {
    content: "";
    position: absolute;
    left: 1px;
    top: 30px;
    border: 4px solid transparent;
    border-left: 4px solid #e8e8e8;
    border-right: 0;
  }
  .side {
    width: 35px;
    flex: none;
    display: flex;
    flex-direction: column;
    align-items: center;
    background: #e4e6ec;
  }
  .sidemenu {
    margin-top: 12px;
    margin-left: -1px;
  }
  .sbtn {
    width: 28px;
    height: 28px;
    margin-top: 5px;
    display: flex;
    align-items: center;
    justify-content: center;
    box-sizing: border-box;
  }
  .sbtn svg {
    overflow: visible;
  }
  .sbtn.sel {
    margin-top: 16px;
    border: 1px solid #a4a6ab;
    border-radius: 3px;
    background: #eaebef;
  }

  .status {
    height: 20px;
    flex: none;
    display: flex;
    align-items: stretch;
    background: #dee0e5;
    border-top: 1px solid #c2c4c9;
    box-sizing: border-box;
    font-size: 11.200px;
    color: #333;
  }
  .st {
    flex: none;
    box-sizing: border-box;
    border-right: 1px solid #a6a8ad;
    display: flex;
    align-items: center;
    padding-left: 9px;
    position: relative;
  }
  .st:first-child {
    padding-left: 8px;
  }
  .st.mid {
    justify-content: center;
    padding-left: 0;
  }
  .st.last {
    flex: 1;
    border-right: 0;
  }
  .zoomcell {
    padding-left: 12px;
    gap: 0;
  }
  .zminus {
    width: 7px;
    height: 1px;
    background: #555;
  }
  .ztrack {
    width: 95px;
    height: 1px;
    margin-left: 2px;
    background: #9a9ca1;
    position: relative;
  }
  .ztrack i {
    position: absolute;
    left: 50px;
    top: -4px;
    width: 7px;
    height: 7px;
    border: 1px solid #85878c;
    border-radius: 50%;
    background: #eee;
  }
  .zoomcell span {
    margin-left: 3px;
    font-size: 14px;
    color: #666;
  }
  .clickring {
    position: absolute;
    left: 4px;
    top: 0;
  }
  .cursor {
    position: absolute;
    left: 14px;
    top: 7px;
    z-index: 5;
  }

  .taskbar {
    height: 36px;
    flex: none;
    display: flex;
    align-items: center;
    position: relative;
    background: linear-gradient(90deg, #2a75bb 0, #1b69b3 55%, #155a9f 72%, #0d3e72 85%, #0b3464 100%);
    border-top: 1px solid #1b4d80;
    box-sizing: border-box;
  }
  .sheen {
    position: absolute;
    left: 808px;
    top: 0;
    filter: blur(2px);
  }
  .orb {
    margin-left: 6px;
    width: 34px;
  }
  .pin {
    flex: none;
  }
  .tile {
    width: 55px;
    height: 35px;
    margin-right: 3px;
    flex: none;
    display: flex;
    align-items: center;
    justify-content: center;
    background: linear-gradient(180deg, #5c9bd0, #3478b8);
    border: 1px solid #6fa6d4;
    box-sizing: border-box;
  }
  .tray {
    margin-left: auto;
    display: flex;
    align-items: center;
    height: 100%;
    color: #e4edf6;
    position: relative;
  }
  .lang {
    margin-right: 16px;
    font-size: 12px;
    color: #bcd3ea;
  }
  .help {
    margin-right: 7px;
  }
  .trayup {
    width: 0;
    height: 0;
    margin-right: 11px;
    border: 4px solid transparent;
    border-top: 0;
    border-bottom: 5px solid #d5e2ef;
  }
  .t1,
  .t2,
  .t3,
  .t4,
  .t5,
  .t6 {
    margin-right: 8px;
  }
  .t6 {
    margin-right: 4px;
  }
  .clock {
    width: 80px;
    margin-right: 10px;
    display: flex;
    flex-direction: column;
    align-items: center;
    gap: 3px;
    font-size: 11.500px;
    line-height: 13px;
    color: #dce7f2;
  }

  .cast {
    position: absolute;
    left: 8px;
    top: 666px;
    color: #fff;
    pointer-events: none;
    z-index: 10;
  }
  .rec {
    font-size: 12px;
    font-weight: 700;
    letter-spacing: -.2px;
    text-shadow: 0 0 2px #111, 0 0 2px #111, 0 0 1px #111;
    color: #fff;
  }
  .castline {
    display: flex;
    align-items: center;
    margin-left: 6px;
    margin-top: 1px;
    font-size: 17.500px;
    font-weight: 700;
    text-shadow: 0 0 2px #1a2a40;
    height: 24px;
  }
  .castline svg {
    margin: 0 0 0 -1px;
  }
</style>
